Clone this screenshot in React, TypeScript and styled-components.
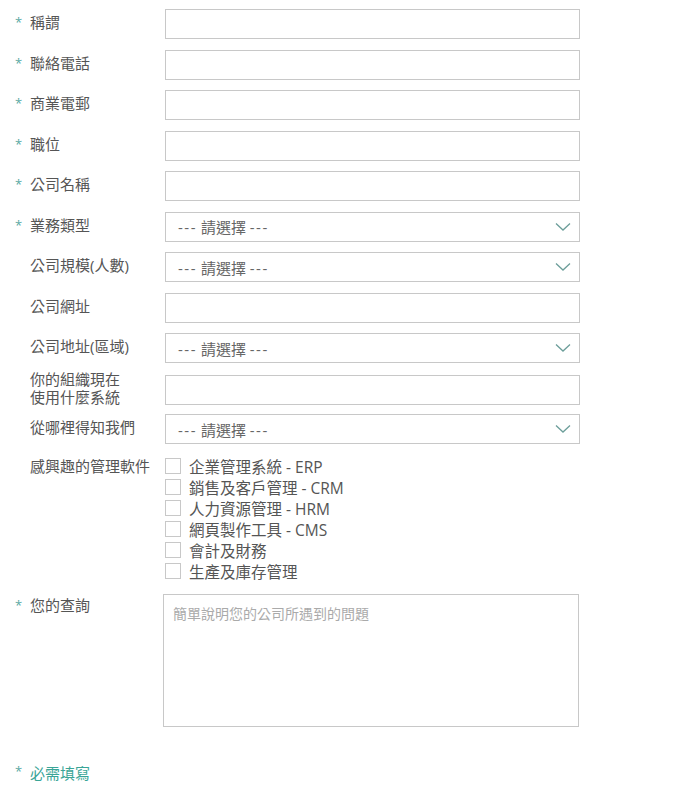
import styled, { createGlobalStyle } from "styled-components";

const GlobalStyle = createGlobalStyle`
  body {
    margin: 0;
    background: #fff;
    font-family: "Open Sans", "Noto Sans CJK TC", sans-serif;
    color: #555;
  }
`;

const Form = styled.form`
  padding: 9px 0 0 15px;
  width: 565px;
`;

const Row = styled.div<{ $top?: boolean }>`
  display: grid;
  grid-template-columns: 150px 415px;
  align-items: ${(p) => (p.$top ? "start" : "center")};
  margin-bottom: 10.5px;
  height: ${(p) => (p.$top ? "auto" : "30px")};
`;

const Label = styled.label<{ $pad?: number }>`
  display: flex;
  align-items: flex-start;
  font-size: 15px;
  line-height: 18px;
  color: #555;
  padding-top: ${(p) => p.$pad ?? 0}px;
  margin-top: ${(p) => (p.$pad === undefined ? "-4px" : "0")};
`;

const Star = styled.span<{ $show: boolean }>`
  width: 15px;
  flex: none;
  color: #5aa9a3;
  font-size: 13px;
  visibility: ${(p) => (p.$show ? "visible" : "hidden")};
`;

const Input = styled.input`
  box-sizing: border-box;
  width: 415px;
  height: 30px;
  border: 1px solid #c8c8c8;
  outline: none;
  padding: 0 12px;
  font: inherit;
`;

const SelectBox = styled.div`
  box-sizing: border-box;
  width: 415px;
  height: 30px;
  border: 1px solid #c8c8c8;
  display: flex;
  align-items: center;
  justify-content: space-between;
  padding: 0 8px 0 12px;
  font-size: 15px;
  color: #666;
`;

const Dashes = styled.span`
  letter-spacing: 1.5px;
`;

const Checks = styled.div`
  display: flex;
  flex-direction: column;
  padding: 1px 0 2px;
`;

const CheckItem = styled.label`
  display: flex;
  align-items: center;
  height: 21px;
  font-size: 15.5px;
  color: #555;
`;

const Box = styled.span`
  box-sizing: border-box;
  width: 16px;
  height: 16px;
  border: 1px solid #c8c8c8;
  margin-right: 8px;
  flex: none;
`;

const TextArea = styled.textarea`
  box-sizing: border-box;
  width: 416px;
  height: 133px;
  margin-left: -2px;
  border: 1px solid #c8c8c8;
  padding: 8px 9px;
  font: inherit;
  font-size: 14px;
  resize: none;
  outline: none;
  &::placeholder {
    color: #aaa;
  }
`;

const Note = styled.div`
  margin-top: 35px;
  display: flex;
  font-size: 15px;
  color: #3aa597;
`;

const Chevron = () => (
  <svg width="16" height="10" viewBox="0 0 16 10">
    <path d="M1 1.5 L8 8 L15 1.5" fill="none" stroke="#6c9e9a" strokeWidth="1.3" />
  </svg>
);

const fields: { label: string; req: boolean; kind: "input" | "select" }[] = [
  { label: "稱謂", req: true, kind: "input" },
  { label: "聯絡電話", req: true, kind: "input" },
  { label: "商業電郵", req: true, kind: "input" },
  { label: "職位", req: true, kind: "input" },
  { label: "公司名稱", req: true, kind: "input" },
  { label: "業務類型", req: true, kind: "select" },
  { label: "公司規模(人數)", req: false, kind: "select" },
  { label: "公司網址", req: false, kind: "input" },
  { label: "公司地址(區域)", req: false, kind: "select" },
  { label: "你的組織現在\n使用什麼系統", req: false, kind: "input" },
  { label: "從哪裡得知我們", req: false, kind: "select" },
];

const software = [
  "企業管理系統 - ERP",
  "銷售及客戶管理 - CRM",
  "人力資源管理 - HRM",
  "網頁製作工具 - CMS",
  "會計及財務",
  "生產及庫存管理",
];

export default function App() {
  return (
    <>
      <GlobalStyle />
      <Form>
        {fields.map((f) => (
          <Row key={f.label}>
            <Label>
              <Star $show={f.req}>*</Star>
              <span style={{ whiteSpace: "pre-line" }}>{f.label}</span>
            </Label>
            {f.kind === "input" ? (
              <Input />
            ) : (
              <SelectBox>
                <span>
                  <Dashes>---</Dashes> 請選擇 <Dashes>---</Dashes>
                </span>
                <Chevron />
              </SelectBox>
            )}
          </Row>
        ))}
        <Row $top>
          <Label $pad={2}>
            <Star $show={false}>*</Star>
            <span>感興趣的管理軟件</span>
          </Label>
          <Checks>
            {software.map((s) => (
              <CheckItem key={s}>
                <Box />
                {s}
              </CheckItem>
            ))}
          </Checks>
        </Row>
        <Row $top>
          <Label $pad={2}>
            <Star $show>*</Star>
            <span>您的查詢</span>
          </Label>
          <TextArea placeholder="簡單說明您的公司所遇到的問題" />
        </Row>
        <Note>
          <Star $show>*</Star>
          <span>必需填寫</span>
        </Note>
      </Form>
    </>
  );
}
